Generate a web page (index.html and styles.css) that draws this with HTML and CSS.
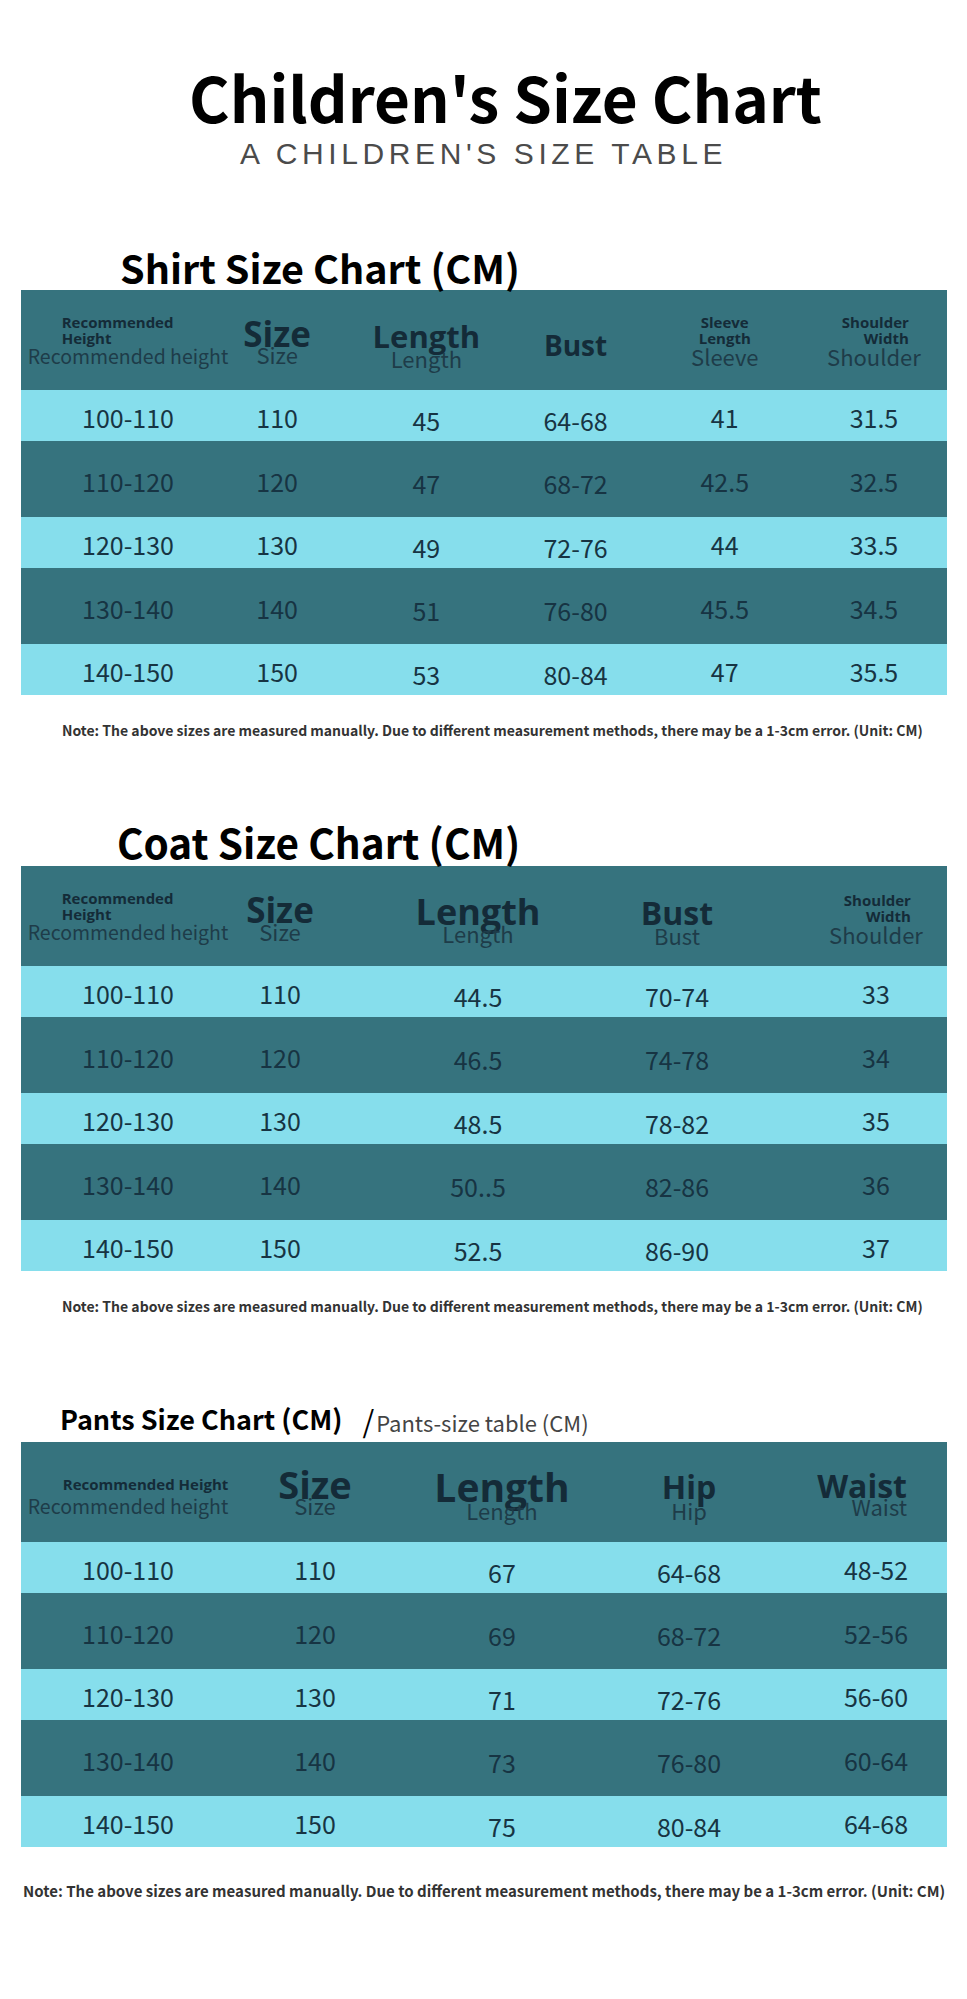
FILE: index.html
```html
<!DOCTYPE html>
<html lang="en">
<head>
<meta charset="utf-8">
<title>Children's Size Chart</title>
<link rel="stylesheet" href="styles.css">
</head>
<body>
<main class="page">
  <header class="hero">
    <h1 class="hero-title">Children's Size Chart</h1>
    <p class="hero-sub">A CHILDREN'S SIZE TABLE</p>
  </header>

  <section class="chart chart--shirt">
    <h2 class="chart-title">Shirt Size Chart (CM)</h2>
    <div class="table table--shirt">
      <div class="row row--head">
        <div class="cell pt-0">
          <div class="rec">
            <span class="mini rec-mini">Recommended<br>Height</span>
            <span class="sub rec-sub">Recommended height</span>
          </div>
        </div>
        <div class="cell pt-2"><span class="big big--35 lh-26">Size</span><span class="sub">Size</span></div>
        <div class="cell pt-6"><span class="big big--31">Length</span><span class="sub">Length</span></div>
        <div class="cell pt-10"><span class="big big--28">Bust</span></div>
        <div class="cell pt-0">
          <div class="stack">
            <span class="mini">Sleeve<br>Length</span>
            <span class="sub sub--tight">Sleeve</span>
          </div>
        </div>
        <div class="cell pt-0">
          <div class="stack">
            <span class="mini mini--right">Shoulder<br>Width</span>
            <span class="sub sub--tight">Shoulder</span>
          </div>
        </div>
      </div>
      <div class="row row--a"><div class="cell">100-110</div><div class="cell">110</div><div class="cell">45</div><div class="cell">64-68</div><div class="cell">41</div><div class="cell">31.5</div></div>
      <div class="row row--b"><div class="cell">110-120</div><div class="cell">120</div><div class="cell">47</div><div class="cell">68-72</div><div class="cell">42.5</div><div class="cell">32.5</div></div>
      <div class="row row--a"><div class="cell">120-130</div><div class="cell">130</div><div class="cell">49</div><div class="cell">72-76</div><div class="cell">44</div><div class="cell">33.5</div></div>
      <div class="row row--b"><div class="cell">130-140</div><div class="cell">140</div><div class="cell">51</div><div class="cell">76-80</div><div class="cell">45.5</div><div class="cell">34.5</div></div>
      <div class="row row--a"><div class="cell">140-150</div><div class="cell">150</div><div class="cell">53</div><div class="cell">80-84</div><div class="cell">47</div><div class="cell">35.5</div></div>
    </div>
    <p class="note">Note: The above sizes are measured manually. Due to different measurement methods, there may be a 1-3cm error. (Unit: CM)</p>
  </section>

  <section class="chart chart--coat">
    <h2 class="chart-title">Coat Size Chart (CM)</h2>
    <div class="table table--coat">
      <div class="row row--head">
        <div class="cell pt-0">
          <div class="rec">
            <span class="mini rec-mini">Recommended<br>Height</span>
            <span class="sub rec-sub">Recommended height</span>
          </div>
        </div>
        <div class="cell pt-2"><span class="big big--35 lh-28">Size</span><span class="sub">Size</span></div>
        <div class="cell pt-6"><span class="big big--36 lh-28">Length</span><span class="sub">Length</span></div>
        <div class="cell pt-8"><span class="big big--32">Bust</span><span class="sub">Bust</span></div>
        <div class="cell pt-4">
          <div class="stack">
            <span class="mini mini--right">Shoulder<br>Width</span>
            <span class="sub sub--tight">Shoulder</span>
          </div>
        </div>
      </div>
      <div class="row row--a"><div class="cell">100-110</div><div class="cell">110</div><div class="cell">44.5</div><div class="cell">70-74</div><div class="cell">33</div></div>
      <div class="row row--b"><div class="cell">110-120</div><div class="cell">120</div><div class="cell">46.5</div><div class="cell">74-78</div><div class="cell">34</div></div>
      <div class="row row--a"><div class="cell">120-130</div><div class="cell">130</div><div class="cell">48.5</div><div class="cell">78-82</div><div class="cell">35</div></div>
      <div class="row row--b"><div class="cell">130-140</div><div class="cell">140</div><div class="cell">50..5</div><div class="cell">82-86</div><div class="cell">36</div></div>
      <div class="row row--a"><div class="cell">140-150</div><div class="cell">150</div><div class="cell">52.5</div><div class="cell">86-90</div><div class="cell">37</div></div>
    </div>
    <p class="note">Note: The above sizes are measured manually. Due to different measurement methods, there may be a 1-3cm error. (Unit: CM)</p>
  </section>

  <section class="chart chart--pants">
    <h2 class="chart-title">Pants Size Chart (CM)<span class="slash">/</span><span class="title-sub">Pants-size table (CM)</span></h2>
    <div class="table table--pants">
      <div class="row row--head">
        <div class="cell pt-8">
          <div class="rec rec--right">
            <span class="mini rec-mini">Recommended Height</span>
            <span class="sub rec-sub">Recommended height</span>
          </div>
        </div>
        <div class="cell pb-2"><span class="big big--38 lh-28">Size</span><span class="sub">Size</span></div>
        <div class="cell pt-3"><span class="big big--39 lh-32">Length</span><span class="sub">Length</span></div>
        <div class="cell pt-3"><span class="big big--32 lh-32">Hip</span><span class="sub">Hip</span></div>
        <div class="cell cell--end pt-2"><span class="big big--32 lh-26">Waist</span><span class="sub">Waist</span></div>
      </div>
      <div class="row row--a"><div class="cell">100-110</div><div class="cell">110</div><div class="cell">67</div><div class="cell">64-68</div><div class="cell">48-52</div></div>
      <div class="row row--b"><div class="cell">110-120</div><div class="cell">120</div><div class="cell">69</div><div class="cell">68-72</div><div class="cell">52-56</div></div>
      <div class="row row--a"><div class="cell">120-130</div><div class="cell">130</div><div class="cell">71</div><div class="cell">72-76</div><div class="cell">56-60</div></div>
      <div class="row row--b"><div class="cell">130-140</div><div class="cell">140</div><div class="cell">73</div><div class="cell">76-80</div><div class="cell">60-64</div></div>
      <div class="row row--a"><div class="cell">140-150</div><div class="cell">150</div><div class="cell">75</div><div class="cell">80-84</div><div class="cell">64-68</div></div>
    </div>
    <p class="note">Note: The above sizes are measured manually. Due to different measurement methods, there may be a 1-3cm error. (Unit: CM)</p>
  </section>
</main>
</body>
</html>
```

FILE: styles.css
```css
* { box-sizing: border-box; }

body {
  margin: 0;
  background: #ffffff;
}

.page {
  width: 967px;
  min-height: 1999px;
  padding-top: 63px;
  font-family: "Noto Sans CJK SC", "Noto Sans", sans-serif;
  color: #000;
}

/* ---------- hero ---------- */
.hero-title {
  margin: 0;
  padding-left: 44px;
  text-align: center;
  font-size: 62px;
  line-height: 66px;
  font-weight: 700;
  color: #000;
}

.hero-sub {
  margin: 10px 0 0;
  text-align: center;
  font-family: "Liberation Sans", Arial, sans-serif;
  font-size: 30px;
  line-height: 30px;
  letter-spacing: 4.6px;
  color: #4b4b4b;
}

/* ---------- section titles ---------- */
.chart-title {
  margin: 0;
  line-height: 42px;
  font-weight: 700;
  color: #000;
  white-space: nowrap;
}

.chart--shirt .chart-title { margin-top: 77px; padding-left: 120px; font-size: 39.5px; }
.chart--coat .chart-title { margin-top: 81px; padding-left: 117px; font-size: 40.5px; }
.chart--pants .chart-title {
  margin-top: 89px;
  padding-left: 60px;
  font-size: 27px;
  line-height: 28px;
}

.slash {
  margin-left: 20px;
  font-size: 30px;
  font-weight: 400;
  line-height: 0;
  vertical-align: -3px;
  color: #000;
}

.title-sub {
  margin-left: 2px;
  font-size: 22px;
  font-weight: 400;
  line-height: 0;
  vertical-align: -2px;
  color: #444;
}

/* ---------- tables ---------- */
.table {
  width: 926px;
  margin-left: 21px;
}

.table--shirt { margin-top: 2px; }
.table--coat { margin-top: 3px; }
.table--pants { margin-top: 9px; }

.row {
  display: grid;
  padding-left: 37px;
}

.table--shirt .row {
  grid-template-columns: repeat(6, 140px);
  column-gap: 9.2px;
}

.table--coat .row {
  grid-template-columns: 140px 164px 232px 166px 1fr;
}

.table--coat .row .cell:last-child { padding-left: 45px; }

.table--pants .row {
  grid-template-columns: repeat(5, 140px);
  column-gap: 47px;
}

.row--head { height: 100px; background: #36737e; }
.row--a { height: 51px; background: #86deec; }
.row--b { height: 76px; background: #36737e; }

.cell {
  display: flex;
  flex-direction: column;
  align-items: center;
  justify-content: center;
  min-width: 0;
  white-space: nowrap;
}

.row--a .cell,
.row--b .cell {
  padding-top: 3px;
  font-size: 25px;
  line-height: 30px;
  font-weight: 400;
  color: #173443;
}

.row--a .cell:nth-child(3),
.row--a .cell:nth-child(4),
.row--b .cell:nth-child(3),
.row--b .cell:nth-child(4) {
  padding-top: 8px;
}

/* header cell vertical offsets */
.row--head .pt-0 { padding-top: 0; }
.row--head .pt-2 { padding-top: 2px; }
.row--head .pt-3 { padding-top: 3px; }
.row--head .pt-4 { padding-top: 4px; }
.row--head .pt-6 { padding-top: 6px; }
.row--head .pt-8 { padding-top: 8px; }
.row--head .pt-10 { padding-top: 10px; }
.row--head .pb-2 { padding-bottom: 2px; }

/* ---------- header labels ---------- */
.mini {
  display: block;
  font-family: "Open Sans", "Noto Sans", sans-serif;
  font-weight: 700;
  font-size: 15px;
  line-height: 16px;
  color: #142b38;
}

.mini--right {
  text-align: right;
  padding-right: 12px;
}

.big {
  display: block;
  font-family: "Open Sans", "Noto Sans", sans-serif;
  font-weight: 700;
  line-height: 30px;
  color: #142b38;
}

.big--28 { font-size: 28px; }
.big--31 { font-size: 31px; }
.big--32 { font-size: 32px; }
.big--35 { font-size: 35px; }
.big--36 { font-size: 36px; }
.big--38 { font-size: 38px; }
.big--39 { font-size: 39px; }

.lh-26 { line-height: 26px; }
.lh-28 { line-height: 28px; }
.lh-32 { line-height: 32px; }

.sub {
  display: block;
  font-size: 22px;
  line-height: 14px;
  margin-top: 0;
  font-weight: 400;
  color: #1e3c49;
}

.sub--tight {
  line-height: 20px;
}

.stack {
  display: flex;
  flex-direction: column;
  align-items: stretch;
  text-align: center;
}

.rec {
  display: flex;
  flex-direction: column;
  align-items: flex-start;
}

.rec-mini { margin-left: 34px; }

.rec-sub {
  font-size: 19.5px;
  line-height: 20px;
}

.rec--right .rec-mini {
  align-self: flex-end;
  margin-left: 0;
}

.rec--right .rec-sub { margin-top: 4px; }

.cell--end { align-items: flex-end; padding-right: 39px; }

/* ---------- notes ---------- */
.note {
  margin: 0;
  font-size: 14px;
  line-height: 20px;
  font-weight: 700;
  color: #333;
  white-space: nowrap;
}

.chart--shirt .note { margin-top: 25px; padding-left: 62px; }
.chart--coat .note { margin-top: 25px; padding-left: 62px; }
.chart--pants .note { margin-top: 34px; padding-left: 23px; font-size: 15px; }
```
